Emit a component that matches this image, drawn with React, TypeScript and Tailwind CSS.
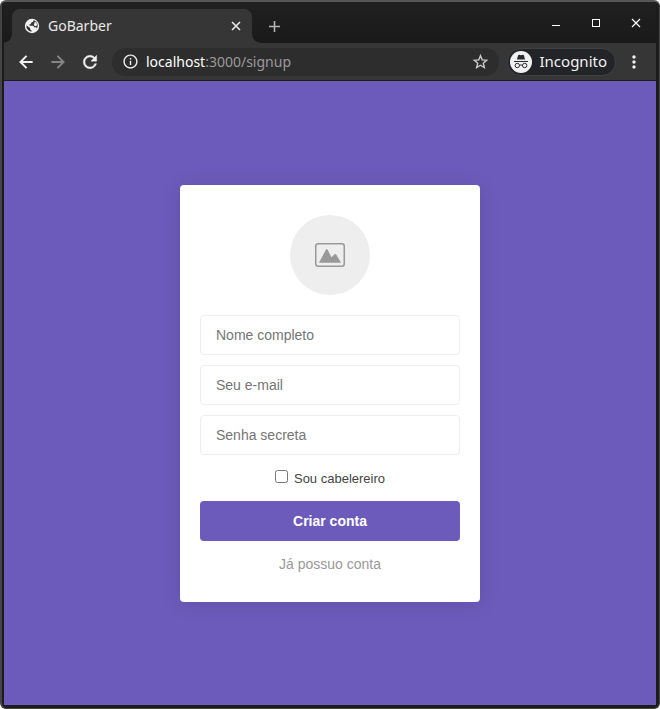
import type { ReactNode } from "react";
import { MdAdd, MdInfoOutline, MdMoreVert } from "react-icons/md";

function IconButton({ label, children }: { label: string; children: ReactNode }) {
  return (
    <button
      type="button"
      aria-label={label}
      className="flex h-5 w-5 shrink-0 items-center justify-center"
    >
      {children}
    </button>
  );
}

function ArrowIcon({ direction }: { direction: "left" | "right" }) {
  return (
    <svg width="20" height="20" viewBox="0 0 24 24" aria-hidden="true">
      <path
        d={direction === "left" ? "M20 12H5.500M12.700 4.700 5.400 12l7.300 7.300" : "M4 12h14.500M11.300 4.700l7.300 7.300-7.300 7.300"}
        fill="none"
        stroke="currentColor"
        strokeWidth="2.400"
      />
    </svg>
  );
}

function ReloadIcon() {
  return (
    <svg width="20" height="20" viewBox="0 0 24 24" aria-hidden="true">
      <path
        d="M17.650 6.350A7.958 7.958 0 0 0 12 4c-4.420 0-7.990 3.580-7.990 8s3.570 8 7.990 8c3.730 0 6.840-2.550 7.730-6h-2.080A5.990 5.990 0 0 1 12 18c-3.310 0-6-2.690-6-6s2.690-6 6-6c1.660 0 3.140.690 4.220 1.780L13 11h7V4z"
        fill="currentColor"
        stroke="currentColor"
        strokeWidth="0.500"
      />
    </svg>
  );
}

function StarIcon() {
  return (
    <svg width="17" height="17" viewBox="0 0 24 24" aria-hidden="true">
      <path
        d="M12 3.800l2.400 5.900 6.300.5-4.800 4.200 1.500 6.200-5.400-3.300-5.400 3.300 1.500-6.200-4.800-4.200 6.300-.5z"
        fill="none"
        stroke="currentColor"
        strokeWidth="2"
      />
    </svg>
  );
}

function GlobeIcon() {
  return (
    <svg width="16" height="16" viewBox="0 0 16 16" aria-hidden="true" className="shrink-0">
      <circle cx="8" cy="8" r="7.200" fill="#f1f1f1" />
      <path
        d="M9.600 2.100q.2 1.500-1.100 1.900-1.600.2-1.500 1.600-.2.900-1.700 1-.2 1.100.9 1.100h2.700q1.100.2 1.200 1.500h1.300q1.200 0 1.500 1.200A5.700 5.700 0 0 0 9.600 2.100z"
        fill="#363636"
      />
      <path
        d="M2.400 7.200A5.700 5.700 0 0 0 7.500 13.700v-1.300q-1.400-.2-1.400-1.600v-.8z"
        fill="#363636"
      />
      <path d="M11 3.500q1.900 1.300 2.200 3.600l-1.600 1.200q-1.800-.4-1.700-1.800z" fill="#f1f1f1" />
    </svg>
  );
}

function CrossIcon({ weight }: { weight: number }) {
  return (
    <svg width="8" height="8" viewBox="0 0 8 8" aria-hidden="true" className="overflow-visible">
      <path d="M0 0 8 8M8 0 0 8" stroke="currentColor" strokeWidth={weight} />
    </svg>
  );
}

function IncognitoIcon() {
  return (
    <svg width="22" height="22" viewBox="0 0 22 22" aria-hidden="true" className="shrink-0">
      <circle cx="11" cy="11" r="11" fill="#f1f1f1" />
      <path
        d="M6.900 8.600 8.100 4.400q.3-.8 1.100-.6l1.800.4 1.800-.4q.8-.2 1.100.6l1.200 4.200z"
        fill="#292a2d"
      />
      <path d="M4 10.500h14" stroke="#292a2d" strokeWidth="1" />
      <g fill="none" stroke="#292a2d" strokeWidth="1">
        <circle cx="7.300" cy="14.500" r="2.200" />
        <circle cx="14.700" cy="14.500" r="2.200" />
        <path d="M9.500 14.300q1.500-.8 3 0" />
      </g>
    </svg>
  );
}

function PictureIcon() {
  return (
    <svg width="30" height="24" viewBox="0 0 30 24" aria-hidden="true">
      <rect x="0.750" y="0.750" width="28.500" height="22.500" rx="2.500" fill="none" stroke="#999" strokeWidth="1.500" />
      <path
        d="M4.200 19.200 11 6.600q.7-1 1.400 0l4.100 7.700 3-3q.8-.7 1.500 0l4.800 7.900q.2.600-.4.600H4.600q-.6 0-.4-.6z"
        fill="#999"
      />
    </svg>
  );
}

function TitleBar() {
  return (
    <header className="flex h-[41px] items-end bg-linear-to-b from-[#202020] to-[#1a1a1a] pl-2">
      <div className="relative flex h-[34px] w-60 items-center rounded-t-lg bg-[#363636] pr-1.5 pl-3 text-[#e8e8e8]">
        <span className="absolute bottom-0 -left-2 h-2 w-2 bg-[radial-gradient(circle_at_0_0,#1a1a1a_7px,#363636_8px)]" />
        <span className="absolute -right-2 bottom-0 h-2 w-2 bg-[radial-gradient(circle_at_100%_0,#1a1a1a_7px,#363636_8px)]" />
        <GlobeIcon />
        <span className="ml-2 grow text-sm">GoBarber</span>
        <IconButton label="Fechar aba">
          <CrossIcon weight={1.600} />
        </IconButton>
      </div>
      <div className="flex h-[34px] grow items-center justify-between pr-2.5 pl-3 text-white">
        <span className="flex text-[#b5b5b5]">
          <IconButton label="Nova aba">
            <MdAdd size={19} />
          </IconButton>
        </span>
        <div className="flex gap-5 pb-1.5">
          <IconButton label="Minimizar">
            <span className="mt-1 h-px w-2 bg-white" />
          </IconButton>
          <IconButton label="Maximizar">
            <span className="h-2 w-2 border border-white" />
          </IconButton>
          <IconButton label="Fechar janela">
            <CrossIcon weight={1.200} />
          </IconButton>
        </div>
      </div>
    </header>
  );
}

function Toolbar() {
  return (
    <nav className="flex h-[38px] items-center border-b border-[#1c1c1c] bg-[#363636] px-3 text-[#f1f1f1]">
      <div className="flex gap-3">
        <IconButton label="Voltar">
          <ArrowIcon direction="left" />
        </IconButton>
        <span className="flex text-[#858585]">
          <IconButton label="Avançar">
            <ArrowIcon direction="right" />
          </IconButton>
        </span>
        <IconButton label="Recarregar">
          <ReloadIcon />
        </IconButton>
      </div>
      <div className="ml-3 flex h-7 grow items-center rounded-full bg-[#2d2d2d] px-2">
        <IconButton label="Informações do site">
          <MdInfoOutline size={17} />
        </IconButton>
        <p className="ml-1.5 grow text-sm text-[#9a9a9a]">
          <span className="text-white">localhost</span>:3000/signup
        </p>
        <span className="flex text-[#c8c8c8]">
          <IconButton label="Favoritar">
            <StarIcon />
          </IconButton>
        </span>
      </div>
      <button
        type="button"
        className="ml-2 flex h-7 items-center gap-2 rounded-full border border-[#3f4042] bg-[#222428] pr-2 pl-0.5 text-[15px]"
      >
        <IncognitoIcon />
        Incognito
      </button>
      <span className="ml-2 flex">
        <IconButton label="Menu">
          <MdMoreVert size={20} />
        </IconButton>
      </span>
    </nav>
  );
}

function Field({ label, name, type }: { label: string; name: string; type: string }) {
  return (
    <input
      aria-label={label}
      name={name}
      type={type}
      placeholder={label}
      className="h-10 w-full rounded border border-[#eee] bg-white px-[15px] text-sm text-[#444] placeholder:text-[#757575]"
    />
  );
}

function SignUpForm() {
  return (
    <form className="flex w-[300px] flex-col items-center rounded bg-white px-5 py-[30px] font-['Liberation_Sans',Arial,sans-serif] shadow-[0_2px_20px_rgba(0,0,0,0.12)]">
      <button
        type="button"
        aria-label="Escolher avatar"
        className="mb-5 flex h-20 w-20 items-center justify-center rounded-full bg-[#eee]"
      >
        <PictureIcon />
      </button>
      <div className="flex w-full flex-col gap-2.5">
        <Field label="Nome completo" name="name" type="text" />
        <Field label="Seu e-mail" name="email" type="email" />
        <Field label="Senha secreta" name="password" type="password" />
      </div>
      <label className="mt-[15px] flex h-4 items-start gap-1.5 text-[13px] leading-[18px] text-[#444]">
        <input type="checkbox" name="provider" className="h-[13px] w-[13px]" />
        Sou cabelereiro
      </label>
      <button type="submit" className="mt-[15px] h-10 w-full rounded bg-[#6d5bbb] text-sm font-bold text-white">
        Criar conta
      </button>
      <a href="#signin" className="mt-[15px] text-sm leading-4 text-[#999]">
        Já possuo conta
      </a>
    </form>
  );
}

export default function App() {
  return (
    <div className="min-h-screen bg-white">
      <div className="flex min-h-screen flex-col rounded-md border-t-2 border-r border-b border-l-2 border-t-[#565656] border-r-[#444] border-b-[#444] border-l-[#444] bg-[#1c1c1c] pr-[3px] pb-[3px] pl-0.5 font-['Noto_Sans',sans-serif]">
        <TitleBar />
        <Toolbar />
        <main className="flex grow items-center justify-center bg-[#6d5bbb]">
          <SignUpForm />
        </main>
      </div>
    </div>
  );
}
